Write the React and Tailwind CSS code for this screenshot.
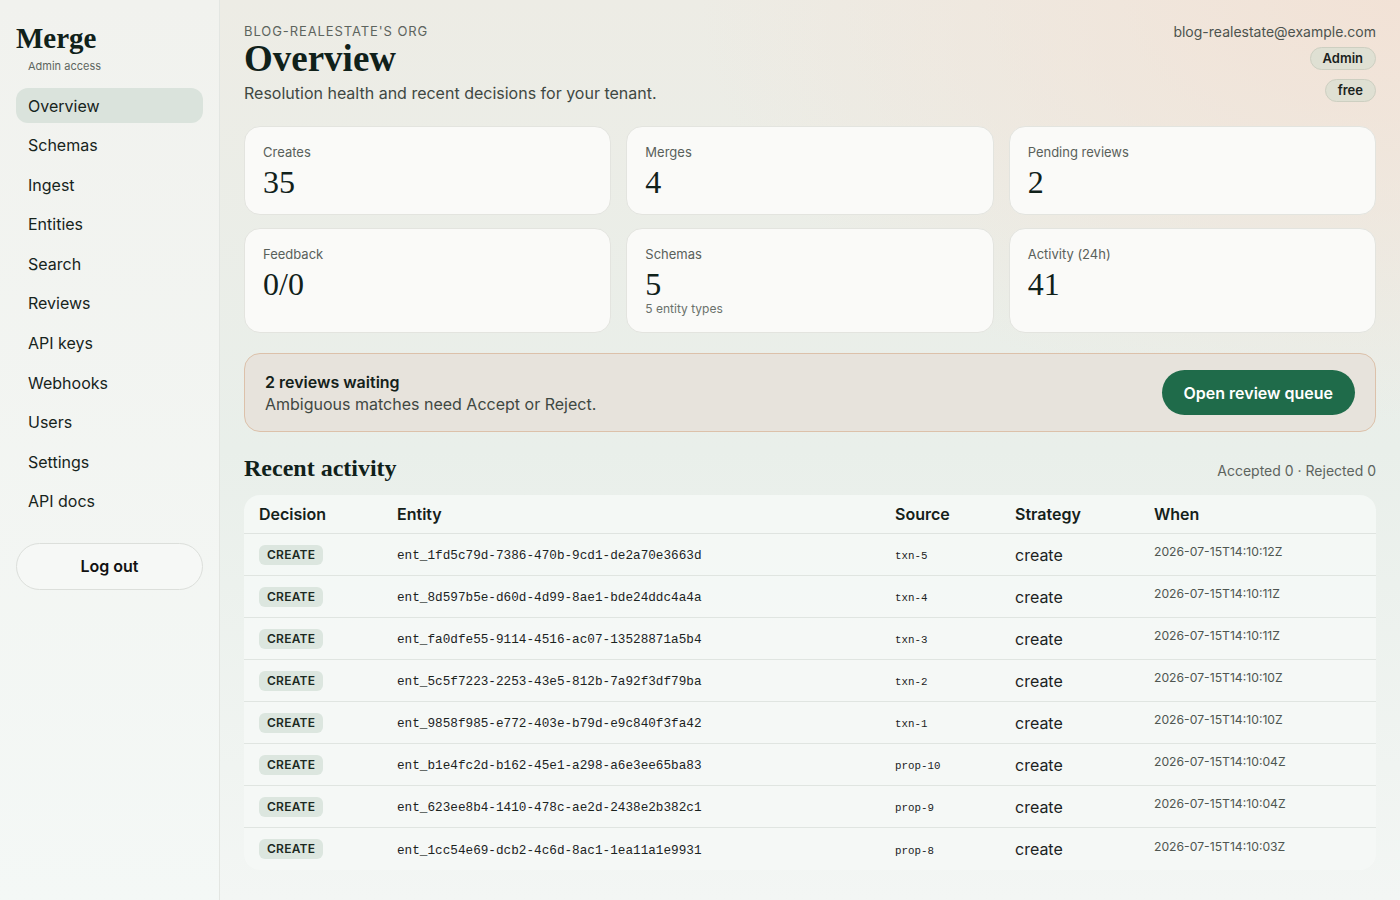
import React from "react";

const navItems = [
  "Overview",
  "Schemas",
  "Ingest",
  "Entities",
  "Search",
  "Reviews",
  "API keys",
  "Webhooks",
  "Users",
  "Settings",
  "API docs",
];

const stats = [
  { label: "Creates", value: "35" },
  { label: "Merges", value: "4" },
  { label: "Pending reviews", value: "2" },
  { label: "Feedback", value: "0/0" },
  { label: "Schemas", value: "5", sub: "5 entity types" },
  { label: "Activity (24h)", value: "41" },
];

const rows = [
  ["ent_1fd5c79d-7386-470b-9cd1-de2a70e3663d", "txn-5", "2026-07-15T14:10:12Z"],
  ["ent_8d597b5e-d60d-4d99-8ae1-bde24ddc4a4a", "txn-4", "2026-07-15T14:10:11Z"],
  ["ent_fa0dfe55-9114-4516-ac07-13528871a5b4", "txn-3", "2026-07-15T14:10:11Z"],
  ["ent_5c5f7223-2253-43e5-812b-7a92f3df79ba", "txn-2", "2026-07-15T14:10:10Z"],
  ["ent_9858f985-e772-403e-b79d-e9c840f3fa42", "txn-1", "2026-07-15T14:10:10Z"],
  ["ent_b1e4fc2d-b162-45e1-a298-a6e3ee65ba83", "prop-10", "2026-07-15T14:10:04Z"],
  ["ent_623ee8b4-1410-478c-ae2d-2438e2b382c1", "prop-9", "2026-07-15T14:10:04Z"],
  ["ent_1cc54e69-dcb2-4c6d-8ac1-1ea11a1e9931", "prop-8", "2026-07-15T14:10:03Z"],
];

const serif = "font-['Liberation_Serif','DejaVu_Serif',serif]";
const mono = "font-['Liberation_Mono','Courier_New',monospace]";

function Sidebar() {
  return (
    <aside className="w-[220px] shrink-0 border-r border-[#e3e6e2] bg-gradient-to-b from-[#f1f2ee] to-[#f4f8f6] px-4 pt-[22px]">
      <div className={`${serif} text-[29px] font-bold leading-8 text-[#10211a]`}>Merge</div>
      <div className="mt-[5px] pl-3 text-[11px] leading-[14px] text-[#5e665f]">Admin access</div>

      <nav className="mt-[15px] flex flex-col gap-[4.6px]">
        {navItems.map((item, i) => (
          <div
            key={item}
            className={`flex h-[35px] items-center rounded-xl px-3 text-[16px] text-[#17241c] ${
              i === 0 ? "bg-[#dae3dc]" : ""
            }`}
          >
            {item}
          </div>
        ))}
      </nav>

      <button className="mt-6 flex h-[47px] w-full items-center justify-center rounded-full border border-[#dcdfdb] bg-[#f6f8f6] text-[16px] font-semibold text-[#111]">
        Log out
      </button>
    </aside>
  );
}

function StatCard({ stat }) {
  return (
    <div className="rounded-2xl border border-[#e3e4df] bg-[#fafaf8] px-[18px] pb-[15px] pt-4">
      <div className="text-[13px] leading-[18px] text-[#59605a]">{stat.label}</div>
      <div className={`${serif} mt-1 text-[32px] font-medium leading-[34px] text-[#10211a]`}>{stat.value}</div>
      {stat.sub && <div className="text-[12px] leading-4 text-[#6a716b]">{stat.sub}</div>}
    </div>
  );
}

function ActivityTable() {
  const th = "py-[8px] text-[16px] font-semibold leading-[22px] text-[#14211a]";
  return (
    <div className="overflow-hidden rounded-2xl bg-[#f5f8f6]/90">
      <table className="w-full table-fixed border-collapse text-left">
        <thead>
          <tr className="border-b border-[#dfe4e0]">
            <th className={`w-[153px] pl-[15px] ${th}`}>Decision</th>
            <th className={`w-[498px] ${th}`}>Entity</th>
            <th className={`w-[120px] ${th}`}>Source</th>
            <th className={`w-[139px] ${th}`}>Strategy</th>
            <th className={th}>When</th>
          </tr>
        </thead>
        <tbody>
          {rows.map(([entity, source, when], i) => (
            <tr key={entity} className={i < rows.length - 1 ? "border-b border-[#e0e5e1]" : ""}>
              <td className="h-[42px] pl-[15px]">
                <span className="flex h-5 w-fit items-center rounded-md bg-[#dce6df] px-2 text-[12px] font-semibold tracking-[0.02em] text-[#1c2a22]">
                  CREATE
                </span>
              </td>
              <td className={`${mono} pt-[3px] text-[12.7px] text-[#1b231e]`}>{entity}</td>
              <td className={`${mono} pt-[4px] text-[10.8px] text-[#1b231e]`}>{source}</td>
              <td className="text-[16px] text-[#1c231f]">create</td>
              <td className="pb-[4px] text-[12.2px] text-[#4f5651]">{when}</td>
            </tr>
          ))}
        </tbody>
      </table>
    </div>
  );
}

export default function App() {
  return (
    <div className="flex min-h-screen font-['Inter','Noto_Sans',sans-serif] text-[#17241c] bg-[radial-gradient(ellipse_700px_420px_at_100%_0%,#f2e2d6_0%,rgba(242,226,214,0)_100%),linear-gradient(to_bottom,#edece5_0%,#e9efea_50%,#f3f6f4_100%)]">
      <Sidebar />

      <main className="flex-1 px-6 pb-7 pt-[23px]">
        {/* Header */}
        <div className="flex items-start justify-between">
          <div>
            <div className="text-[13px] uppercase leading-4 tracking-[0.07em] text-[#5d645e]">
              blog-realestate's org
            </div>
            <h1 className={`${serif} text-[37px] font-bold leading-[40px] text-[#10211a]`}>Overview</h1>
            <p className="mt-[2px] text-[16px] leading-6 text-[#3f4842]">
              Resolution health and recent decisions for your tenant.
            </p>
          </div>
          <div className="flex flex-col items-end">
            <div className="text-[14px] leading-[18px] text-[#4c534e]">blog-realestate@example.com</div>
            <span className="mt-[6px] flex h-[23px] items-center rounded-full border border-[#cdcfc1] bg-[#dfe0d3] px-3 text-[13px] font-semibold text-[#1a231d]">
              Admin
            </span>
            <span className="mt-[9px] flex h-[23px] items-center rounded-full border border-[#cdcfc1] bg-[#dfe0d3] px-3 text-[13px] font-semibold text-[#1a231d]">
              free
            </span>
          </div>
        </div>

        {/* Stat cards */}
        <div className="mt-[21px] grid grid-cols-3 gap-x-[15px] gap-y-[13px]">
          {stats.map((s) => (
            <StatCard key={s.label} stat={s} />
          ))}
        </div>

        {/* Review banner */}
        <div className="mt-[20px] flex items-center justify-between rounded-2xl border border-[#dcc1aa] bg-[#e7e3dc] py-[16px] pl-5 pr-5">
          <div>
            <div className="text-[16px] font-semibold leading-[22px] text-[#14211a]">2 reviews waiting</div>
            <div className="text-[16px] leading-[22px] text-[#3f4842]">Ambiguous matches need Accept or Reject.</div>
          </div>
          <button className="flex h-[45px] items-center rounded-full bg-[#1f6b4a] px-[22px] text-[16px] font-semibold text-white">
            Open review queue
          </button>
        </div>

        {/* Recent activity */}
        <div className="mt-[22px] mb-[13px] flex items-end justify-between">
          <h2 className={`${serif} text-[24px] font-bold leading-7 text-[#10211a]`}>Recent activity</h2>
          <div className="pb-[1px] text-[14px] leading-5 text-[#5d645e]">Accepted 0 · Rejected 0</div>
        </div>

        <ActivityTable />
      </main>
    </div>
  );
}
